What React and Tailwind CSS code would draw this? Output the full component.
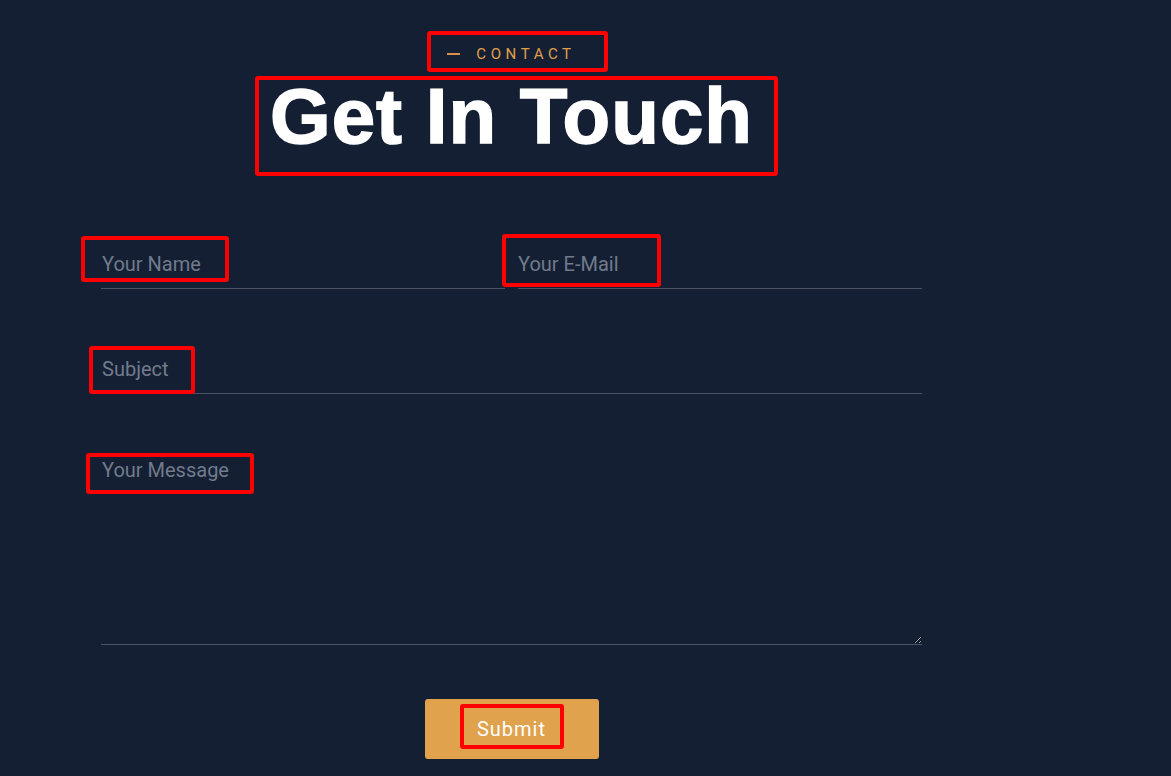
export default function App() {
  const boxes = [
    "left-[427px] top-[31px] w-[181px] h-[41px]",
    "left-[255px] top-[76px] w-[523px] h-[100px]",
    "left-[81px] top-[236px] w-[148px] h-[46px]",
    "left-[502px] top-[234px] w-[159px] h-[53px]",
    "left-[89px] top-[346px] w-[106px] h-[48px]",
    "left-[86px] top-[453px] w-[168px] h-[41px]",
    "left-[460px] top-[704px] w-[104px] h-[45px]",
  ];
  return (
    <div className="relative min-h-screen w-full bg-[#141f33] overflow-hidden" style={{ fontFamily: "Roboto, 'Liberation Sans', sans-serif" }}>
      <div className="ml-[101px] w-[821px] pt-[44px] pb-[17px] flex flex-col">
        <div className="h-[20px] flex items-center justify-center gap-[16px]">
          <span className="block w-[13px] h-[2px] bg-[#d9914a]"></span>
          <span className="text-[15px] leading-[20px] tracking-[4.6px] text-[#e09f4b]">CONTACT</span>
        </div>
        <h1
          className="mt-[13px] text-center text-white text-[78px] leading-[78px] font-bold tracking-[1px] [-webkit-text-stroke:1.5px_white]"
          style={{ fontFamily: "'Liberation Sans', Arial, sans-serif" }}
        >
          Get In Touch
        </h1>
        <form className="mt-[84px] flex flex-col" onSubmit={(e) => e.preventDefault()}>
          <div className="grid grid-cols-2 gap-[13px]">
            <input
              placeholder="Your Name"
              className="h-[50px] bg-transparent border-b border-[#4a5263] pl-[1px] text-[20px] text-white placeholder:text-[#717b8b] outline-none"
            />
            <input
              placeholder="Your E-Mail"
              className="h-[50px] bg-transparent border-b border-[#4a5263] text-[20px] text-white placeholder:text-[#717b8b] outline-none"
            />
          </div>
          <input
            placeholder="Subject"
            className="mt-[55px] h-[50px] bg-transparent border-b border-[#4a5263] pl-[1px] text-[20px] text-white placeholder:text-[#717b8b] outline-none"
          />
          <textarea
            placeholder="Your Message"
            className="mt-[55px] h-[196px] bg-transparent border-b border-[#4a5263] pt-[9px] pl-[1px] text-[20px] leading-[24px] text-white placeholder:text-[#717b8b] outline-none"
          />
          <div className="mt-[54px] flex justify-center">
            <button
              type="submit"
              className="w-[174px] h-[60px] rounded-[3px] bg-[#e0a24c] text-white text-[20px] tracking-[1px]"
            >
              Submit
            </button>
          </div>
        </form>
      </div>
      {boxes.map((b, i) => (
        <div key={i} className={`pointer-events-none absolute border-[4px] border-[#ff0000] rounded-[3px] ${b}`}></div>
      ))}
    </div>
  );
}
